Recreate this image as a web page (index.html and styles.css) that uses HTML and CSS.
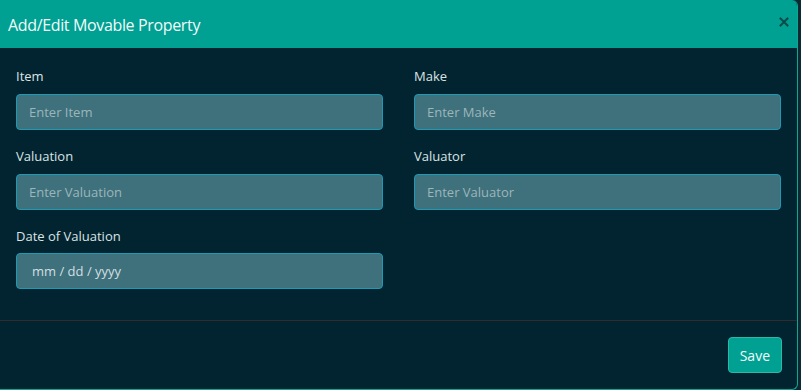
FILE: index.html
```html
<!DOCTYPE html>
<html lang="en">
<head>
    <meta charset="UTF-8">
    <meta name="viewport" content="width=device-width, initial-scale=1.0">
    <title>Add/Edit Movable Property</title>
    <link rel="stylesheet" href="styles.css">
</head>
<body>
    <div class="modal">
        <div class="modal-header">
            <h5 class="modal-title">Add/Edit Movable Property</h5>
            <button class="close" type="button" aria-label="Close">
                <svg width="10" height="10" viewBox="0 0 10 10">
                    <path d="M1.5 1.5 L8.5 8.5 M8.5 1.5 L1.5 8.5" stroke="currentColor" stroke-width="2" stroke-linecap="square"/>
                </svg>
            </button>
        </div>

        <form class="modal-body">
            <div class="field">
                <label for="item">Item</label>
                <input id="item" type="text" placeholder="Enter Item">
            </div>
            <div class="field">
                <label for="make">Make</label>
                <input id="make" type="text" placeholder="Enter Make">
            </div>
            <div class="field">
                <label for="valuation">Valuation</label>
                <input id="valuation" type="text" placeholder="Enter Valuation">
            </div>
            <div class="field">
                <label for="valuator">Valuator</label>
                <input id="valuator" type="text" placeholder="Enter Valuator">
            </div>
            <div class="field">
                <label for="dateOfValuation">Date of Valuation</label>
                <input id="dateOfValuation" type="text" class="date" placeholder="mm / dd / yyyy">
            </div>
        </form>

        <div class="modal-footer">
            <button class="button" type="button">Save</button>
        </div>
    </div>
</body>
</html>
```

FILE: styles.css
```css
body {
    margin: 0;
    background: #0b2a33;
    font-family: "Open Sans", "Noto Sans", sans-serif;
    color: #d9e2e3;
}
.modal {
    width: 797px;
    background: #012430;
    border-right: 1px solid #0fa595;
    border-bottom: 1px solid #0fa595;
    border-radius: 0 6px 6px 0;
    overflow: hidden;
}
.modal-header {
    height: 48px;
    display: flex;
    align-items: center;
    justify-content: space-between;
    padding: 2px 8px 0 8px;
    box-sizing: border-box;
    background: #00a092;
}
.modal-title {
    margin: 0;
    font-size: 16px;
    font-weight: 400;
    letter-spacing: -0.35px;
    color: #f2fbfa;
}
.close {
    background: none;
    border: 0;
    padding: 0;
    margin-right: 0;
    margin-top: -6px;
    color: #0b4c4a;
    display: flex;
}
.modal-body {
    display: grid;
    grid-template-columns: 1fr 1fr;
    column-gap: 31px;
    padding: 18px 16px 15px 16px;
}
.field {
    display: flex;
    flex-direction: column;
    margin-bottom: 16px;
}
.field:nth-child(5) label {
    margin-bottom: 7px;
}
label {
    font-size: 13px;
    line-height: 20px;
    margin-bottom: 8px;
    color: #dbe3e4;
}
input {
    height: 36px;
    box-sizing: border-box;
    padding: 0 12px;
    background: #3e717c;
    border: 1px solid #1c9bb7;
    border-radius: 4px;
    font-family: inherit;
    font-size: 13px;
    color: #d3dfe1;
    outline: none;
}
input::placeholder {
    color: #9db5bb;
}
.date {
    padding-left: 15px;
}
.date::placeholder {
    color: #d3dfe1;
}
.modal-footer {
    display: flex;
    justify-content: flex-end;
    padding: 16px 15px 16px 16px;
    border-top: 1px solid #322b2b;
}
.button {
    height: 36px;
    padding: 0 11px;
    background: #00a092;
    border: 1px solid #2bbaa8;
    border-radius: 4px;
    color: #f2fbfa;
    font-family: inherit;
    font-size: 14px;
}
```
